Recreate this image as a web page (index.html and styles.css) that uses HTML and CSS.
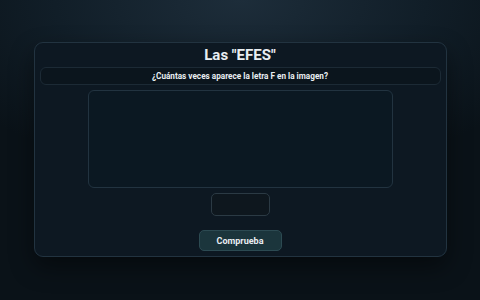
FILE: index.html
```html
<!doctype html>
<html>
  <head>
    <meta charset="UTF-8" />
    <title>Las EFES</title>
    <link rel="stylesheet" href="styles.css">
  </head>
  <body>
    <div class="container">
      <h1>Las "EFES"</h1>
      <div class="question">¿Cuántas veces aparece la letra F en la imagen?</div>
      <div class="image-box"></div>
      <input type="text" id="answer" class="answer" />
      <button id="check-button">Comprueba</button>
    </div>
  </body>
</html>
```

FILE: styles.css
```css
:root {
  --bg-primary: #0a1319;
  --bg-card: #0d1822;
  --border: #223340;
  --text: #e9eef2;
  --accent: #1b353c;
}

* {
  margin: 0;
  padding: 0;
  box-sizing: border-box;
}

html,
body {
  height: 100%;
}

body {
  font-family: Roboto, 'Liberation Sans', sans-serif;
  background: radial-gradient(ellipse 70% 60% at 50% 0%, #1d2d3a 0%, #111e28 55%, #0a1218 100%);
  color: var(--text);
  padding-top: 42px;
}

.container {
  width: 413px;
  height: 215px;
  margin: 0 auto;
  background-color: var(--bg-card);
  border: 1px solid var(--border);
  border-radius: 9px;
  padding: 0 5px;
  display: flex;
  flex-direction: column;
  align-items: center;
  box-shadow: 0 10px 24px rgba(0, 0, 0, 0.45);
}

h1 {
  font-size: 15px;
  font-weight: 700;
  height: 24px;
  line-height: 25px;
  text-align: center;
}

.question {
  width: 100%;
  height: 18px;
  line-height: 17px;
  background-color: #0b151d;
  border: 1px solid #1c2a35;
  border-radius: 6px;
  font-size: 8.2px;
  font-weight: 700;
  text-align: center;
}

.image-box {
  width: 305px;
  height: 98px;
  margin-top: 5px;
  border: 1px solid var(--border);
  border-radius: 6px;
  background-color: #0b1822;
}

.answer {
  width: 59px;
  height: 23px;
  margin-top: 5px;
  border: 1px solid #2b3a44;
  border-radius: 5px;
  background-color: #0e171e;
  color: var(--text);
}

button {
  width: 83px;
  height: 21px;
  margin-top: 14px;
  border: 1px solid #2c4a52;
  border-radius: 5px;
  background-color: var(--accent);
  color: var(--text);
  font-family: inherit;
  font-size: 9px;
  font-weight: 700;
  cursor: pointer;
}
```
